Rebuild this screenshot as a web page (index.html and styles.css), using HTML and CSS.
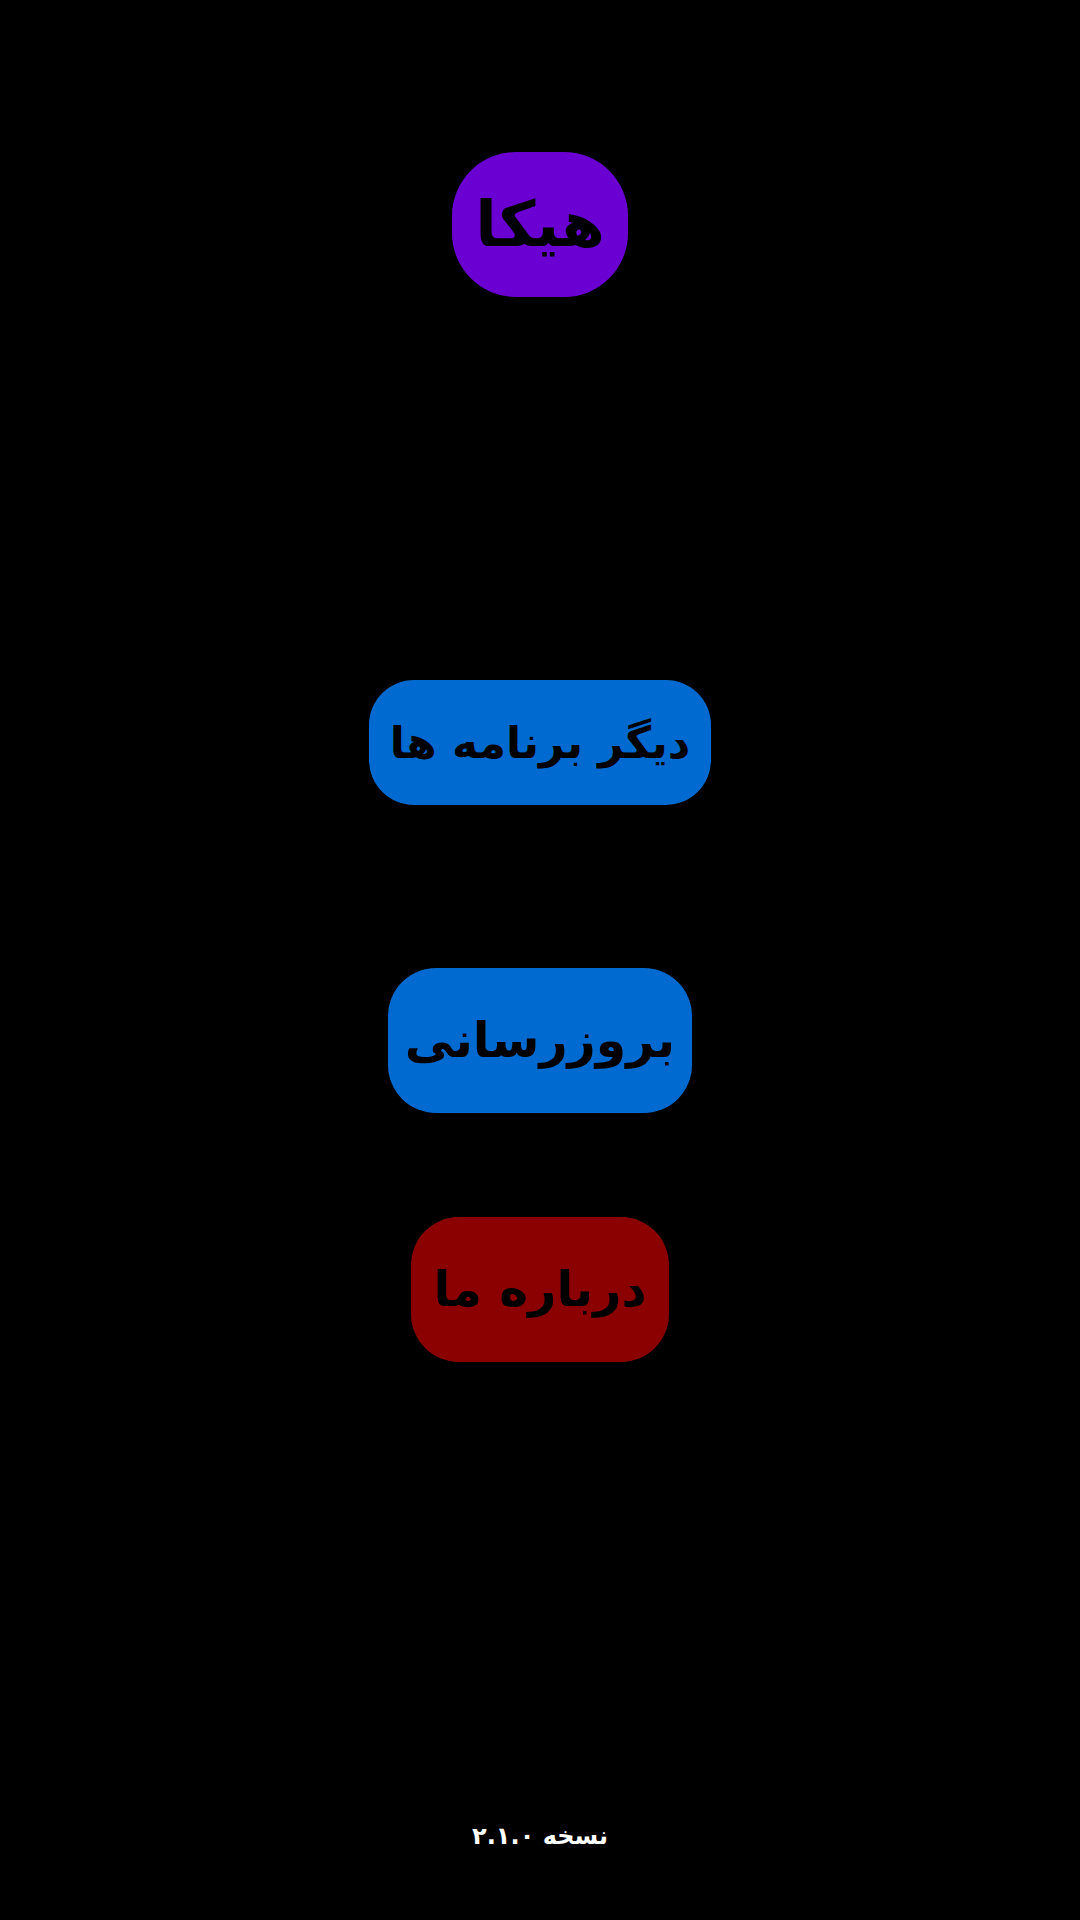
FILE: index.html
```html
<!DOCTYPE html>
<html lang="fa" dir="rtl">
<head>
<meta charset="utf-8">
<link rel="stylesheet" href="styles.css">
</head>
<body>
<div class="screen">
  <div class="logo">هیکا</div>
  <div class="btn btn-blue btn-small">دیگر برنامه ها</div>
  <div class="btn btn-blue btn-update">بروزرسانی</div>
  <div class="btn btn-red btn-about">درباره ما</div>
  <div class="spacer"></div>
  <div class="version">نسخه ۲.۱.۰</div>
</div>
</body>
</html>
```
FILE: styles.css
```css
html, body {
  margin: 0;
  padding: 0;
  background: #000;
}
.screen {
  width: 1080px;
  height: 1920px;
  display: flex;
  flex-direction: column;
  align-items: center;
  font-family: "DejaVu Sans", "Noto Sans", sans-serif;
  font-weight: bold;
  color: #000;
}
.logo {
  margin-top: 152px;
  height: 145px;
  width: 176px;
  border-radius: 64px;
  background: #6a00d2;
  display: flex;
  align-items: center;
  justify-content: center;
  font-size: 63px;
}
.btn {
  display: flex;
  align-items: center;
  justify-content: center;
  height: 145px;
  border-radius: 48px;
  font-size: 49px;
  white-space: nowrap;
}
.btn-blue { background: #006ad0; }
.btn-red { background: #8b0000; }
.btn-small {
  margin-top: 383px;
  height: 125px;
  width: 342px;
  font-size: 44px;
  border-radius: 45px;
}
.btn-update {
  margin-top: 163px;
  width: 304px;
}
.btn-about {
  margin-top: 104px;
  width: 258px;
}
.spacer { flex: 1; }
.version {
  color: #fff;
  font-size: 24px;
  margin-bottom: 64px;
  line-height: 40px;
}
```
